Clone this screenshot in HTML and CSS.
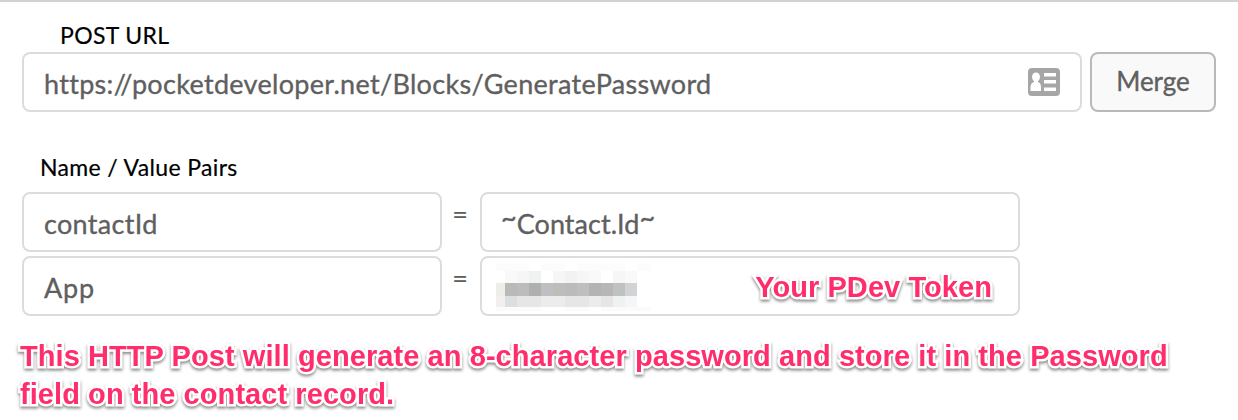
FILE: index.html
```
<!DOCTYPE html>
<html lang="en">
<head>
    <meta charset="UTF-8">
    <meta name="viewport" content="width=device-width, initial-scale=1.0">
    <title>HTTP Post</title>
    <link rel="stylesheet" href="styles.css">
</head>
<body>
    <div class="post-form">
        <div class="label url-label">POST URL</div>
        <div class="url-row">
            <div class="field url-field">
                <span>https://pocketdeveloper.net/Blocks/GeneratePassword</span>
                <!-- Contact card icon -->
                <svg class="card-icon" width="32" height="28" viewBox="0 0 32 28">
                    <rect width="32" height="28" rx="4" fill="#a6a6a6"/>
                    <ellipse cx="8" cy="9" rx="4" ry="4.500" fill="#fff"/>
                    <path d="M6 11h4v3q3 .8 3 5.500v3.500h-10.500v-3.500q0-4.700 3.500-5.500z" fill="#fff"/>
                    <path d="M16 5h12v3.500H16zM16 12h12v3.500H16zM16 19.500h12v3.500H16z" fill="#fff"/>
                </svg>
            </div>
            <button class="merge-button" type="button">Merge</button>
        </div>

        <div class="label pairs-label">Name / Value Pairs</div>
        <div class="pair-row">
            <div class="field name-field">contactId</div>
            <span class="equals">=</span>
            <div class="field value-field contact-field"><span class="tilde">~</span><span>Contact.Id</span><span class="tilde">~</span></div>
        </div>
        <div class="pair-row">
            <div class="field name-field app-field">App</div>
            <span class="equals">=</span>
            <div class="field value-field token-field">
                <!-- Pixelated token -->
                <svg class="mosaic" width="155" height="48" viewBox="0 0 155 48" shape-rendering="crispEdges">
                    <path d="M0 0h33v8H0zM45 0h24v8H45zM81 0h48v8H81zM141 0h14v8h-14z" fill="#fcfcfc"/>
                    <path d="M9 8h12v12H9zM69 8h12v12H69zM93 8h12v12H93zM129 8h12v12h-12z" fill="#f9f9f9"/>
                    <path d="M21 8h12v12H21zM57 8h12v12H57zM81 8h12v12H81zM117 8h12v12h-12z" fill="#f6f6f6"/>
                    <rect x="33" y="8" width="12" height="12" fill="#f0f2f2"/>
                    <rect x="69" y="8" width="12" height="12" fill="#f2f2f2"/>
                    <rect x="0" y="20" width="9" height="13" fill="#eeeee9"/>
                    <rect x="9" y="20" width="12" height="13" fill="#b9b9b9"/>
                    <rect x="21" y="20" width="12" height="13" fill="#bcbcbc"/>
                    <rect x="33" y="20" width="12" height="13" fill="#afafaf"/>
                    <rect x="45" y="20" width="12" height="13" fill="#bebfc1"/>
                    <rect x="57" y="20" width="12" height="13" fill="#bfbdba"/>
                    <rect x="69" y="20" width="12" height="13" fill="#b9bcbb"/>
                    <rect x="81" y="20" width="12" height="13" fill="#bfbfbf"/>
                    <rect x="93" y="20" width="12" height="13" fill="#b3b3b3"/>
                    <rect x="105" y="20" width="12" height="13" fill="#b7b7b7"/>
                    <rect x="117" y="20" width="12" height="13" fill="#bfc2c1"/>
                    <rect x="129" y="20" width="12" height="13" fill="#d2d3d5"/>
                    <rect x="0" y="33" width="9" height="11" fill="#f2f0ee"/>
                    <rect x="9" y="33" width="12" height="11" fill="#dbdfdd"/>
                    <path d="M21 33h12v11H21zM33 33h12v11H33zM69 33h24v11H69zM105 33h12v11h-12z" fill="#e6e6e6"/>
                    <path d="M45 33h24v11H45zM93 33h12v11H93z" fill="#ececec"/>
                    <rect x="117" y="33" width="12" height="11" fill="#eff2f2"/>
                    <rect x="129" y="33" width="12" height="11" fill="#f4f7f7"/>
                    <path d="M0 44h45v4H0zM69 44h24v4H69zM105 44h50v4h-50z" fill="#fbfbfb"/>
                </svg>
                <span class="note token-note">Your PDev Token</span>
            </div>
        </div>
        <p class="note post-note">This HTTP Post will generate an 8-character password and store it in the Password<br>field on the contact record.</p>
    </div>
</body>
</html>
```
FILE: styles.css
```
body {
    margin: 0;
    background: #fff;
    font-family: 'Lato', sans-serif;
    font-variant-ligatures: none;
    overflow: hidden;
}

.post-form {
    box-sizing: border-box;
    height: 420px;
    padding: 0 22px;
    border-top: 2px solid #d2d2d2;
}

.label {
    font-size: 23px;
    line-height: 28px;
    letter-spacing: 0.35px;
    color: #000;
    white-space: nowrap;
    -webkit-text-stroke: 0.2px #000;
}

.url-label {
    padding: 19px 0 3px 38px;
}

.pairs-label {
    padding: 41px 0 11px 18px;
}

/* Fields */
.field {
    box-sizing: border-box;
    display: flex;
    align-items: center;
    height: 60px;
    padding: 4px 20px 0;
    border: 2px solid #dcdcdc;
    border-radius: 8px;
    font-size: 27px;
    line-height: 36px;
    letter-spacing: 0.31px;
    color: #5f5f5f;
    white-space: nowrap;
    -webkit-text-stroke: 0.35px #5f5f5f;
}

.url-row {
    display: flex;
    gap: 8px;
}

.url-field {
    width: 1060px;
    justify-content: space-between;
}

.card-icon {
    margin-bottom: 4px;
    -webkit-text-stroke: 0;
}

.merge-button {
    width: 126px;
    height: 60px;
    padding: 0 0 2px;
    border: 2px solid #b9b9b9;
    border-radius: 8px;
    background: #f9f9f9;
    font-family: inherit;
    font-size: 26px;
    color: #5f5f5f;
    -webkit-text-stroke: 0.35px #5f5f5f;
}

/* Name / value rows */
.pair-row {
    display: flex;
    margin-bottom: 4px;
}

.name-field {
    width: 420px;
}

.app-field {
    letter-spacing: 0.8px;
}

.value-field {
    width: 540px;
}

.contact-field {
    padding-left: 19px;
    letter-spacing: 0.05px;
}

.equals {
    width: 36px;
    padding-right: 2px;
    font-size: 27px;
    line-height: 43px;
    text-align: center;
    color: #5f5f5f;
    -webkit-text-stroke: 0.2px #5f5f5f;
}

.tilde {
    line-height: 24px;
    padding-bottom: 15px;
}

.token-field {
    justify-content: space-between;
    padding: 0 26px 0 14px;
}

.mosaic {
    margin-top: 2px;
}

/* Pink annotations with a white outline */
.note {
    font-family: 'Liberation Sans', sans-serif;
    font-size: 29px;
    font-weight: bold;
    line-height: 38px;
    letter-spacing: 0.07px;
    color: #ff2d6c;
    white-space: nowrap;
    -webkit-text-stroke: 5px #fff;
    paint-order: stroke fill;
    filter: drop-shadow(0 2px 1.5px rgba(0, 0, 0, 0.45));
}

.token-note {
    padding-top: 2px;
}

.post-note {
    margin: 21px 0 0 -2px;
}
```
